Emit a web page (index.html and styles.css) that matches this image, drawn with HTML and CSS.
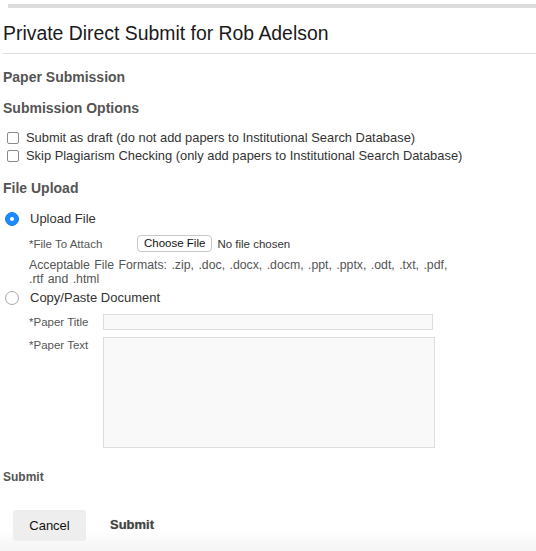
FILE: index.html
```html
<!DOCTYPE html>
<html>
<head>
<meta charset="utf-8">
<link rel="stylesheet" href="styles.css">
</head>
<body>
<div class="topbar"></div>
<h1 class="title">Private Direct Submit for Rob Adelson</h1>
<div class="content">
  <h2 class="h-paper">Paper Submission</h2>
  <h3 class="h-sec">Submission Options</h3>
  <div class="checks">
    <label class="check"><span class="box"></span>Submit as draft (do not add papers to Institutional Search Database)</label>
    <label class="check"><span class="box"></span>Skip Plagiarism Checking (only add papers to Institutional Search Database)</label>
  </div>
  <h3 class="h-sec h-upload">File Upload</h3>
  <div class="radio-row first"><span class="radio on"></span><span class="radio-label">Upload File</span></div>
  <div class="sub">
    <div class="attach-row">
      <span class="field-label">*File To Attach</span>
      <span class="choose">Choose File</span>
      <span class="nofile">No file chosen</span>
    </div>
    <p class="formats">Acceptable File Formats: .zip, .doc, .docx, .docm, .ppt, .pptx, .odt, .txt, .pdf,<br>.rtf and .html</p>
  </div>
  <div class="radio-row second"><span class="radio"></span><span class="radio-label">Copy/Paste Document</span></div>
  <div class="sub paste">
    <div class="field-row">
      <span class="field-label fl">*Paper Title</span>
      <div class="input"></div>
    </div>
    <div class="field-row">
      <span class="field-label fl">*Paper Text</span>
      <div class="textarea"></div>
    </div>
  </div>
  <h4 class="h-submit">Submit</h4>
</div>
<div class="footer">
  <span class="btn-cancel">Cancel</span>
  <span class="btn-submit">Submit</span>
</div>
</body>
</html>
```

FILE: styles.css
```css
html, body {
  margin: 0;
  padding: 0;
  background: #fff;
  font-family: "Liberation Sans", Arial, sans-serif;
  color: #333;
}
body {
  width: 536px;
  height: 551px;
  overflow: hidden;
  position: relative;
}
.topbar {
  margin: 4px 0 0 8px;
  height: 4px;
  background: #dcdcdc;
}
.title {
  margin: 0 0 0 3px;
  padding: 13px 0 8px 0;
  font-size: 19.4px;
  font-weight: normal;
  color: #1a1a1a;
  line-height: 24px;
  border-bottom: 1px solid #dddddd;
}
.content {
  padding-left: 3px;
}
.h-paper {
  margin: 15px 0 0 0;
  font-size: 14px;
  line-height: 16px;
  color: #555;
  font-weight: bold;
}
.h-sec {
  margin: 15px 0 0 0;
  font-size: 14px;
  line-height: 16px;
  color: #555;
  font-weight: bold;
}
.checks {
  margin-top: 14px;
  display: flex;
  flex-direction: column;
  gap: 2px;
}
.check {
  display: flex;
  align-items: center;
  font-size: 12.9px;
  line-height: 16px;
  color: #333;
}
.box {
  width: 10px;
  height: 10px;
  border: 1px solid #8a8a8a;
  border-radius: 2px;
  margin: 0 7px 0 4px;
  background: #fff;
}
.h-upload {
  margin-top: 16px;
}
.radio-row {
  display: flex;
  align-items: center;
}
.radio-row.first {
  margin-top: 15px;
}
.radio-row.second {
  margin-top: 4px;
}
.radio {
  width: 12px;
  height: 12px;
  border: 1px solid #a8a8a8;
  border-radius: 50%;
  margin-left: 2px;
  margin-right: 11px;
  background: #fff;
  position: relative;
}
.radio.on {
  background: #1a8cff;
  border-color: #1a7ff0;
}
.radio.on::after {
  content: "";
  position: absolute;
  left: 4px;
  top: 4px;
  width: 4px;
  height: 4px;
  border-radius: 50%;
  background: #fff;
}
.radio-label {
  font-size: 13px;
  line-height: 16px;
  color: #333;
}
.sub {
  padding-left: 26px;
}
.attach-row {
  display: flex;
  align-items: center;
  margin-top: 8px;
}
.field-label {
  font-size: 11.5px;
  color: #555;
  line-height: 14px;
}
.attach-row .field-label {
  width: 108px;
}
.choose {
  font-size: 11.5px;
  color: #111;
  border: 1px solid #c8c8c8;
  border-radius: 4px;
  padding: 1px 6px;
  line-height: 13px;
  background: #fff;
}
.nofile {
  font-size: 11.5px;
  color: #333;
  margin-left: 5px;
}
.formats {
  margin: 6px 0 0 0;
  font-size: 12.3px;
  word-spacing: 1px;
  line-height: 14px;
  color: #555;
}
.paste {
  margin-top: 8px;
}
.field-row {
  display: flex;
  align-items: flex-start;
  margin-bottom: 7px;
}
.fl {
  width: 74px;
  padding-top: 1px;
}
.input {
  width: 328px;
  height: 14px;
  border: 1px solid #dddddd;
  background: #f9f9f9;
}
.textarea {
  width: 330px;
  height: 109px;
  border: 1px solid #dddddd;
  background: #f9f9f9;
}
.h-submit {
  margin: 22px 0 0 0;
  font-size: 12px;
  line-height: 14px;
  color: #555;
  font-weight: bold;
}
.footer {
  position: absolute;
  left: 0;
  right: 0;
  bottom: 0;
  height: 46px;
  display: flex;
  align-items: flex-start;
  background: linear-gradient(#ffffff 0%, #ffffff 55%, #f4f4f4 100%);
}
.btn-cancel {
  margin: 5px 0 0 13px;
  width: 73px;
  height: 31px;
  line-height: 31px;
  text-align: center;
  background: #eeeeee;
  border-radius: 3px;
  font-size: 13px;
  color: #111;
}
.btn-submit {
  margin: 13px 0 0 24px;
  font-size: 13px;
  font-weight: bold;
  color: #444;
  line-height: 14px;
  text-shadow: 0 0 1px #999;
}
```
